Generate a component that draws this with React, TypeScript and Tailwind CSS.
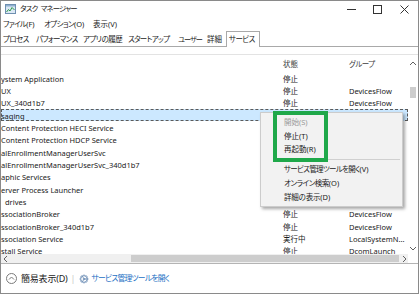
import React from 'react';
import { Cog } from 'lucide-react';

const rows = [
  { name: 'ystem Application', status: '停止', group: '' },
  { name: 'UX', status: '停止', group: 'DevicesFlow' },
  { name: 'UX_340d1b7', status: '停止', group: 'DevicesFlow' },
  { name: 'saging', status: '', group: '', selected: true },
  { name: 'Content Protection HECI Service', status: '', group: '' },
  { name: 'Content Protection HDCP Service', status: '', group: '' },
  { name: 'alEnrollmentManagerUserSvc', status: '', group: '' },
  { name: 'alEnrollmentManagerUserSvc_340d1b7', status: '', group: '' },
  { name: 'aphic Services', status: '', group: '' },
  { name: 'erver Process Launcher', status: '', group: '' },
  { name: 'drives', status: '', group: '', pad: true },
  { name: 'ssociationBroker', status: '停止', group: 'DevicesFlow' },
  { name: 'ssociationBroker_340d1b7', status: '停止', group: 'DevicesFlow' },
  { name: 'ssociation Service', status: '実行中', group: 'LocalSystemN...' },
  { name: 'stall Service', status: '停止', group: 'DcomLaunch' },
];

const tabs = [
  { label: 'プロセス', w: 'w-[33px]', t: 'tracking-[-0.6px]' },
  { label: 'パフォーマンス', w: 'w-[47px]', t: 'tracking-[-0.7px]' },
  { label: 'アプリの履歴', w: 'w-[45px]', t: 'tracking-[-0.5px]' },
  { label: 'スタートアップ', w: 'w-[50px]', t: 'tracking-[-0.7px]' },
  { label: 'ユーザー', w: 'w-[29px]', t: 'text-[7.2px] tracking-[-1px]' },
  { label: '詳細', w: 'w-[21px]', t: '' },
];

const menuItems = [
  { jp: '開始', key: '(S)', t: '', disabled: true },
  { jp: '停止', key: '(T)', t: '' },
  { jp: '再起動', key: '(R)', t: '' },
  { sep: true },
  { jp: 'サービス管理ツールを開く', key: '(V)', t: 'tracking-[-0.7px]' },
  { jp: 'オンライン検索', key: '(O)', t: 'tracking-[-0.5px]' },
  { jp: '詳細の表示', key: '(D)', t: 'tracking-[-0.2px]' },
];

function AppIcon() {
  return (
    <svg width="11" height="10" viewBox="0 0 11 10">
      <rect x="0.5" y="0.5" width="10" height="9" fill="#dbe8f4" stroke="#6e8fb0" />
      <rect x="1" y="1" width="9" height="1.5" fill="#8fb0d0" />
      <polyline points="1.5,8 3.5,5.5 5,7 7,3.5 9.5,6" fill="none" stroke="#2e9a4a" strokeWidth="1" />
    </svg>
  );
}

function Chevron({ dir }: { dir: 'up' | 'down' | 'left' | 'right' }) {
  const pts = {
    up: '1,5 4,2 7,5',
    down: '1,3 4,6 7,3',
    left: '5,1 2,4 5,7',
    right: '3,1 6,4 3,7',
  }[dir];
  return (
    <svg width="8" height="8" viewBox="0 0 8 8">
      <polyline points={pts} fill="none" stroke="#606060" strokeWidth="1" />
    </svg>
  );
}

export default function App() {
  const font = "[font-family:'Noto_Sans','Noto_Sans_CJK_JP',sans-serif] [font-feature-settings:'palt']";
  return (
    <div className={`w-[420px] h-[296px] bg-white overflow-hidden text-[7.5px] text-[#1a1a1a] ${font}`}>
      <div className="relative w-[419px] h-[294px] border border-[#8a8a8a] flex flex-col">
        {/* title bar */}
        <div className="h-[15px] flex items-center shrink-0 pt-[1px] text-[#222]">
          <div className="pl-[4px] pr-[4px] flex items-center"><AppIcon /></div>
          <span className="text-[7.4px] tracking-[-0.7px]">タスク</span>
          <span className="ml-[3px] text-[7.4px] tracking-[-0.8px]">マネージャー</span>
          <div className="ml-auto flex items-center h-full">
            <div className="w-[26px] flex justify-center">
              <svg width="9" height="9" viewBox="0 0 9 9"><line x1="0" y1="4.5" x2="9" y2="4.5" stroke="#333" /></svg>
            </div>
            <div className="w-[26px] flex justify-center">
              <svg width="9" height="9" viewBox="0 0 9 9"><rect x="0.5" y="0.5" width="8" height="8" fill="none" stroke="#333" /></svg>
            </div>
            <div className="w-[28px] flex justify-center">
              <svg width="9" height="9" viewBox="0 0 9 9"><path d="M0.5 0.5L8.5 8.5M8.5 0.5L0.5 8.5" stroke="#333" /></svg>
            </div>
          </div>
        </div>

        {/* menu bar */}
        <div className="h-[16px] flex items-center shrink-0 pt-[1px]">
          <span className="w-[43px] pl-[2px]"><span className="tracking-[-0.7px]">ファイル</span>(F)</span>
          <span className="w-[49px]"><span className="tracking-[-0.6px]">オプション</span>(O)</span>
          <span>表示(V)</span>
        </div>

        {/* tabs */}
        <div className="h-[15px] flex items-stretch shrink-0 border-b border-[#a9a9a9]">
          {tabs.map((t) => (
            <div key={t.label} className={`${t.w} ${t.t} pl-[2px] pt-[1px] flex items-center whitespace-nowrap`}>{t.label}</div>
          ))}
          <div className="w-[34px] -mb-[1px] -mt-[1px] bg-white border border-b-0 border-[#a9a9a9] flex items-center pl-[2px] pt-[1px] whitespace-nowrap tracking-[-0.6px]">
            サービス
          </div>
        </div>

        <div className="h-[7px] shrink-0" />

        {/* list */}
        <div className="flex-1 flex flex-col border-t border-[#e3e3e3] min-h-0">
          <div className="flex-1 flex min-h-0">
            <div className="flex-1 flex flex-col overflow-hidden">
              <div className="h-[17px] flex items-center shrink-0 pt-[2px] text-[#3c3c3c]">
                <div className="w-[278px]" />
                <div className="w-[66px] pl-[4px]">状態</div>
                <div className="pl-[4px] tracking-[-0.5px]">グループ</div>
              </div>
              {rows.map((r) => (
                <div
                  key={r.name}
                  className={`h-[12.35px] shrink-0 flex items-center pt-[2px] whitespace-nowrap ${
                    r.selected ? 'bg-[#cce8ff] outline outline-1 outline-dashed outline-[#5a5a5a] -outline-offset-1' : ''
                  }`}
                >
                  <div className={`w-[278px] overflow-hidden ${r.pad ? 'pl-[4px]' : ''}`}>{r.name}</div>
                  <div className="w-[66px] pl-[4px]">{r.status}</div>
                  <div className="pl-[4px]">{r.group}</div>
                </div>
              ))}
            </div>
            {/* vertical scrollbar */}
            <div className="w-[10px] bg-white flex flex-col items-center">
              <div className="h-[16px] pt-[1px] flex items-center"><Chevron dir="up" /></div>
              <div className="h-[11px] w-[6px] bg-[#cdcdcd] mt-[16px]" />
              <div className="flex-1" />
              <div className="h-[12px] flex items-center"><Chevron dir="down" /></div>
            </div>
          </div>
          {/* horizontal scrollbar */}
          <div className="h-[9px] flex shrink-0">
            <div className="flex-1 flex items-center bg-[#f0f0f0]">
              <div className="w-[9px] flex justify-center"><Chevron dir="left" /></div>
              <div className="w-[121px]" />
              <div className="flex-1 h-[7px] bg-[#cdcdcd]" />
              <div className="w-[9px] flex justify-center"><Chevron dir="right" /></div>
            </div>
            <div className="w-[10px] bg-white" />
          </div>
        </div>

        {/* footer */}
        <div className="h-[30px] shrink-0 border-t border-[#b4b4b4] flex items-center pl-[5px]">
          <svg width="11" height="11" viewBox="0 0 11 11">
            <circle cx="5.5" cy="5.5" r="5" fill="none" stroke="#7a7a7a" />
            <polyline points="3,6.5 5.5,4 8,6.5" fill="none" stroke="#7a7a7a" />
          </svg>
          <span className="ml-[4px] text-[9px] tracking-[-0.2px]">簡易表示(D)</span>
          <span className="ml-[3px] text-[#c8c8c8] text-[9px]">|</span>
          <Cog className="ml-[3px] w-[10px] h-[10px] text-[#6b8db5]" strokeWidth={2} />
          <span className="ml-[3px] text-[7.8px] tracking-[-0.8px] text-[#1c6fc4]">サービス管理ツールを開く</span>
        </div>

        {/* context menu */}
        <div className="absolute left-[259px] top-[111px] w-[143px] h-[95px] bg-[#f2f2f2] border border-[#cccccc] shadow-[2px_2px_3px_rgba(0,0,0,0.35)] py-[2px] flex flex-col">
          {menuItems.map((m, i) =>
            m.sep ? (
              <div key={i} className="h-[6px] flex items-center pl-[16px] pr-[2px]"><div className="h-px w-full bg-[#d0d0d0]" /></div>
            ) : (
              <div key={i} className={`h-[14px] flex items-center pl-[23px] pt-[1px] whitespace-nowrap ${m.disabled ? 'text-[#9a9a9a]' : ''}`}>
                <span className={m.t}>{m.jp}</span>
                <span>{m.key}</span>
              </div>
            )
          )}
        </div>
        {/* highlight box */}
        <div className="absolute left-[272px] top-[110px] w-[55px] h-[51px] border-[4px] border-[#1fa84a]" />
      </div>
    </div>
  );
}
